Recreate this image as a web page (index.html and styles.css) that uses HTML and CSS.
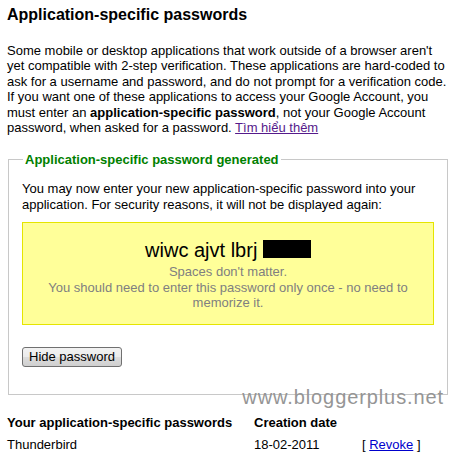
FILE: index.html
```html
<!DOCTYPE html>
<html lang="en">

<head>
    <meta charset="UTF-8">
    <title>Application-specific passwords</title>
    <link rel="stylesheet" href="styles.css">
</head>

<body>
    <div class="page">
        <h2>Application-specific passwords</h2>
        <p class="intro">
            Some mobile or desktop applications that work outside of a browser aren't
            yet compatible with 2-step verification. These applications are hard-coded to
            ask for a username and password, and do not prompt for a verification code.
            If you want one of these applications to access your Google Account, you
            must enter an <b>application-specific password</b>, not your Google Account
            password, when asked for a password. <a href="#" class="visited">Tìm hiểu thêm</a>
        </p>

        <fieldset class="generated">
            <legend>Application-specific password generated</legend>
            <p>You may now enter your new application-specific password into your
                application. For security reasons, it will not be displayed again:</p>
            <div class="password-box">
                <div class="password">wiwc ajvt lbrj <span class="hidden-part"></span></div>
                <div class="hint first">Spaces don't matter.</div>
                <div class="hint">You should need to enter this password only once - no need to
                    memorize it.</div>
            </div>
            <button type="button">Hide password</button>
        </fieldset>

        <div class="watermark">www.bloggerplus.net</div>

        <table class="passwords">
            <tr>
                <th class="col-name">Your application-specific passwords</th>
                <th class="col-date">Creation date</th>
                <th></th>
            </tr>
            <tr>
                <td>Thunderbird</td>
                <td>18-02-2011</td>
                <td>[ <a href="#">Revoke</a> ]</td>
            </tr>
        </table>
    </div>
</body>

</html>
```

FILE: styles.css
```css
body {
    font-family: Arial, "Liberation Sans", sans-serif;
    font-size: 13px;
    color: #000;
    background-color: #fff;
    margin: 0;
    padding: 0;
}

.page {
    position: relative;
    padding: 5px 8px 0 7px;
}

h2 {
    font-size: 16px;
    font-weight: bold;
    line-height: 19px;
    margin: 0 0 19px 0;
}

.intro {
    line-height: 15.4px;
    margin: 0 0 17px 0;
}

a {
    color: #0000cc;
}

a.visited {
    color: #551a8b;
}

.generated {
    border: 1px solid #c8c8c8;
    margin: 0 0 0 1px;
    padding: 14px 13px 27px 13px;
}

.generated legend {
    color: #008000;
    font-weight: bold;
    padding: 0 2px;
    margin-left: 1px;
    line-height: 15px;
}

.generated p {
    line-height: 15.4px;
    margin: 0 0 10px 0;
}

.password-box {
    background-color: #ffff99;
    border: 1px solid #e5e500;
    text-align: center;
    padding: 15px 10px 13px 10px;
    margin-bottom: 22px;
}

.password {
    font-size: 20px;
    line-height: 24px;
    color: #000;
}

.hidden-part {
    display: inline-block;
    width: 48px;
    height: 18px;
    background-color: #000;
    vertical-align: -1px;
}

.hint {
    color: #808080;
    line-height: 15.5px;
    padding: 0 5px;
}

.hint.first {
    margin-top: 2px;
}

button {
    font-family: Arial, "Liberation Sans", sans-serif;
    font-size: 13px;
    color: #000;
    padding: 1px 6px;
    height: 20px;
    border: 1px solid #707070;
    border-radius: 3px;
    background: linear-gradient(#f2f2f2, #ebebeb 50%, #dddddd 51%, #cfcfcf);
}

.watermark {
    position: absolute;
    right: 12px;
    top: 386px;
    font-size: 20px;
    line-height: 23px;
    color: #959595;
    letter-spacing: 0.9px;
}

.passwords {
    border-collapse: collapse;
    margin-top: 20px;
}

.passwords th,
.passwords td {
    text-align: left;
    padding: 0;
    line-height: 15px;
}

.passwords th {
    font-weight: bold;
    padding-bottom: 7px;
}

.col-name {
    width: 247px;
}

.col-date {
    width: 108px;
}
```
